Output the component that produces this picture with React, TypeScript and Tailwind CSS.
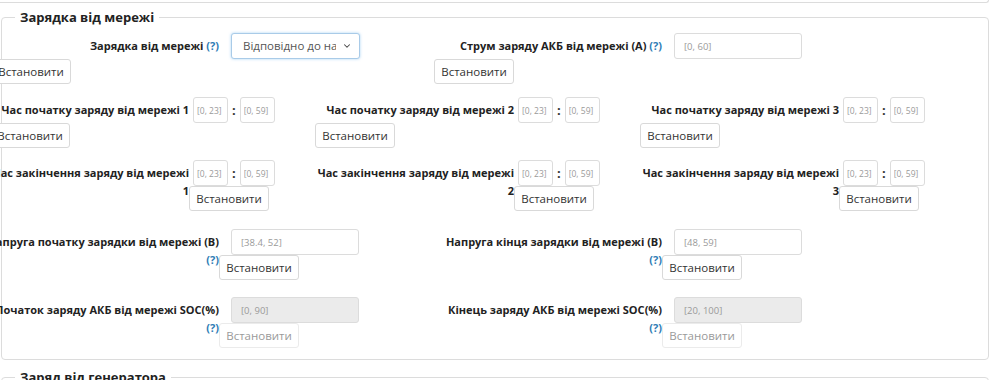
import type { ReactNode } from "react";
import { ChevronDown } from "lucide-react";

function Help() {
  return <span className="font-bold text-[#2f7db6]">(?)</span>;
}

function SetButton({ disabled }: { disabled?: boolean }) {
  return (
    <button
      disabled={disabled}
      className={`inline-block h-[25px] w-[80px] rounded-[3px] border bg-white align-top text-[11.5px] leading-none ${
        disabled ? "border-[#ebebeb] text-[#9a9a9a]" : "border-[#d9d9d9] text-[#333]"
      }`}
    >
      Встановити
    </button>
  );
}

function Label({ lines, width }: { lines: ReactNode[]; width: string }) {
  return (
    <div
      className={`float-left flex flex-col items-end pt-[4px] text-[11px] font-bold leading-[18px] text-[#222] ${width}`}
    >
      {lines.map((l, i) => (
        <span key={i} className="whitespace-nowrap">
          {l}
        </span>
      ))}
    </div>
  );
}

function TimeGroup({ lines }: { lines: ReactNode[] }) {
  return (
    <div className="flow-root w-[325px] shrink-0 text-[12px] leading-none">
      <Label lines={lines} width="w-[199px]" />
      <input
        className="ml-[4px] inline-block h-[26px] w-[35px] rounded-[3px] border border-[#dcdcdc] px-[3px] align-top text-[8.5px] placeholder:text-[#9a9a9a]"
        placeholder="[0, 23]"
      />
      <span className="mx-[4px] inline-block align-top text-[13px] font-bold leading-[26px] text-[#333]">:</span>
      <input
        className="inline-block h-[26px] w-[35px] rounded-[3px] border border-[#dcdcdc] px-[3px] align-top text-[8.5px] placeholder:text-[#9a9a9a]"
        placeholder="[0, 59]"
      />
      <SetButton />
    </div>
  );
}

function FieldGroup({
  lines,
  placeholder,
  disabled,
}: {
  lines: ReactNode[];
  placeholder: string;
  disabled?: boolean;
}) {
  return (
    <div className="flow-root w-[443px] shrink-0 text-[12px] leading-none">
      <Label lines={lines} width="w-[228px]" />
      <input
        disabled={disabled}
        className={`ml-[12px] inline-block h-[26px] w-[128px] rounded-[3px] border border-[#dcdcdc] px-[9px] align-top text-[9.5px] placeholder:text-[#9a9a9a] ${
          disabled ? "bg-[#ebebeb]" : "bg-white"
        }`}
        placeholder={placeholder}
      />
      <SetButton disabled={disabled} />
    </div>
  );
}

function ModeSelect() {
  return (
    <div className="ml-[12px] inline-flex h-[26px] w-[129px] items-center rounded-[3px] border border-[#a9cbe8] bg-white align-top shadow-[0_0_3px_rgba(102,175,233,0.55)]">
      <span className="ml-[11px] w-[93px] overflow-hidden whitespace-nowrap text-[11.5px] text-[#555]">
        Відповідно до налаштувань
      </span>
      <ChevronDown className="ml-auto mr-[7px] h-[10px] w-[10px] text-[#444]" strokeWidth={2.5} />
    </div>
  );
}

export default function App() {
  return (
    <div className="h-[380px] overflow-hidden bg-white font-['Open_Sans',sans-serif] text-[#222]">
      {/* end of the previous block */}
      <div className="h-[3px] w-[989px] rounded-br-[4px] border-r border-b border-[#dcdcdc]" />

      <fieldset className="ml-[1px] mt-[6px] w-[988px] rounded-[4px] border border-[#dcdcdc] pb-[11px]">
        <legend className="ml-[13px] px-[5px] text-[13px] font-bold leading-[16px] text-[#222]">
          Зарядка від мережі
        </legend>

        <div className="ml-[-11px] mt-[8px] flex">
          <div className="flow-root w-[443px] shrink-0 text-[12px] leading-none">
            <Label
              lines={[
                <>
                  Зарядка від мережі <Help />
                </>,
              ]}
              width="w-[228px]"
            />
            <ModeSelect />
            <SetButton />
          </div>
          <FieldGroup
            lines={[
              <>
                Струм заряду АКБ від мережі (А) <Help />
              </>,
            ]}
            placeholder="[0, 60]"
          />
        </div>

        <div className="ml-[-12px] mt-[13px] flex">
          <TimeGroup lines={["Час початку заряду від мережі 1"]} />
          <TimeGroup lines={["Час початку заряду від мережі 2"]} />
          <TimeGroup lines={["Час початку заряду від мережі 3"]} />
        </div>

        <div className="ml-[-12px] mt-[12px] flex">
          <TimeGroup lines={["Час закінчення заряду від мережі", "1"]} />
          <TimeGroup lines={["Час закінчення заряду від мережі", "2"]} />
          <TimeGroup lines={["Час закінчення заряду від мережі", "3"]} />
        </div>

        <div className="ml-[-11px] mt-[18px] flex">
          <FieldGroup lines={["Напруга початку зарядки від мережі (В)", <Help />]} placeholder="[38.4, 52]" />
          <FieldGroup lines={["Напруга кінця зарядки від мережі (В)", <Help />]} placeholder="[48, 59]" />
        </div>

        <div className="ml-[-11px] mt-[17px] flex">
          <FieldGroup lines={["Початок заряду АКБ від мережі SOC(%)", <Help />]} placeholder="[0, 90]" disabled />
          <FieldGroup lines={["Кінець заряду АКБ від мережі SOC(%)", <Help />]} placeholder="[20, 100]" disabled />
        </div>
      </fieldset>

      <fieldset className="ml-[1px] mt-[9px] h-[60px] w-[988px] rounded-[4px] border border-[#dcdcdc]">
        <legend className="ml-[13px] px-[5px] text-[13px] font-bold leading-[16px] text-[#222]">
          Заряд від генератора
        </legend>
      </fieldset>
    </div>
  );
}
